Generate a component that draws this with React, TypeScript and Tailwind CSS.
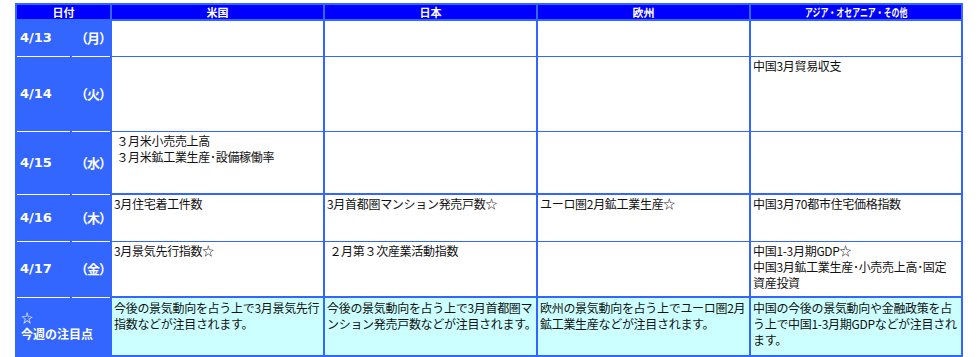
import React from 'react';

// 週間の主な経済指標カレンダー
type Row = {
  date: string;
  wd: string;
  h: string;
  thick: boolean;
  cells: string[][];
};

const rows: Row[] = [
  { date: '4/13', wd: '（月）', h: 'h-[36px]', thick: false, cells: [[], [], [], []] },
  { date: '4/14', wd: '（火）', h: 'h-[75px]', thick: false, cells: [[], [], [], ['中国3月貿易収支']] },
  {
    date: '4/15',
    wd: '（水）',
    h: 'h-[63px]',
    thick: true,
    cells: [[' ３月米小売売上高', ' ３月米鉱工業生産･設備稼働率'], [], [], []],
  },
  {
    date: '4/16',
    wd: '（木）',
    h: 'h-[47px]',
    thick: false,
    cells: [['3月住宅着工件数'], ['3月首都圏マンション発売戸数☆'], ['ユーロ圏2月鉱工業生産☆'], ['中国3月70都市住宅価格指数']],
  },
  {
    date: '4/17',
    wd: '（金）',
    h: 'h-[56px]',
    thick: true,
    cells: [
      ['3月景気先行指数☆'],
      [' ２月第３次産業活動指数'],
      [],
      ['中国1-3月期GDP☆', '中国3月鉱工業生産･小売売上高･固定', '資産投資'],
    ],
  },
];

const notes: string[][] = [
  ['今後の景気動向を占う上で3月景気先行', '指数などが注目されます。'],
  ['今後の景気動向を占う上で3月首都圏マ', 'ンション発売戸数などが注目されます。'],
  ['欧州の景気動向を占う上でユーロ圏2月', '鉱工業生産などが注目されます。'],
  ['中国の今後の景気動向や金融政策を占', 'う上で中国1-3月期GDPなどが注目され', 'ます。'],
];

const heads = ['米国', '日本', '欧州', 'アジア・オセアニア・その他'];

function Lines({ lines }: { lines: string[] }) {
  return (
    <>
      {lines.map((l, i) => (
        <div key={i} className="whitespace-pre">
          {l}
        </div>
      ))}
    </>
  );
}

export default function App() {
  const jp = "font-['Noto_Sans_CJK_JP',sans-serif]";
  const th = 'bg-[#0000ff] border-2 border-[#3366ff] text-white text-[11px] leading-[12px] font-bold p-0';
  return (
    <div className={`bg-white w-[978px] h-[357px] pt-[3px] pl-[15px] ${jp}`}>
      <table className="table-fixed border-collapse w-[946px] text-[12px] leading-[16px] text-[#111]">
        <colgroup>
          <col className="w-[55px]" />
          <col className="w-[40px]" />
          <col className="w-[213px]" />
          <col className="w-[213px]" />
          <col className="w-[213px]" />
          <col className="w-[212px]" />
        </colgroup>
        <thead>
          <tr className="h-[16px]">
            <th colSpan={2} className={th}>
              日付
            </th>
            {heads.map((h, i) => (
              <th key={h} className={th}>
                {i === 3 ? <span className="inline-block scale-x-[0.72]">{h}</span> : h}
              </th>
            ))}
          </tr>
        </thead>
        <tbody>
          {rows.map((r) => (
            <tr key={r.date} className={r.h}>
              <td className="bg-[#3366ff] border-l-2 border-r-2 border-l-[#3366ff] border-r-[#3366ff] border-b border-b-white text-white font-bold text-[13px] font-['DejaVu_Sans',sans-serif] pl-[3px] align-middle">
                {r.date}
              </td>
              <td className="bg-[#3366ff] border-r-2 border-r-[#3366ff] border-b border-b-white text-white font-bold text-[13px] align-middle pl-[3px] pr-0 tracking-[-1px]">
                {r.wd}
              </td>
              {r.cells.map((c, i) => (
                <td
                  key={i}
                  className={`align-top border-x-2 border-x-[#3366ff] border-b-[#3366ff] ${
                    r.thick ? 'border-b-2' : 'border-b'
                  } px-[2px] pt-[1px] tracking-[-0.3px] overflow-hidden`}
                >
                  <Lines lines={c} />
                </td>
              ))}
            </tr>
          ))}
          <tr className="h-[59px]">
            <td
              colSpan={2}
              className="bg-[#3366ff] border-2 border-[#3366ff] border-t border-t-white text-white font-bold text-[12px] leading-[16px] pl-[4px] align-middle"
            >
              <div>☆</div>
              <div>今週の注目点</div>
            </td>
            {notes.map((n, i) => (
              <td
                key={i}
                className="align-top bg-[#ccffff] border-2 border-[#3366ff] px-[2px] pt-[2px] tracking-[-0.3px] overflow-hidden"
              >
                <Lines lines={n} />
              </td>
            ))}
          </tr>
        </tbody>
      </table>
    </div>
  );
}
